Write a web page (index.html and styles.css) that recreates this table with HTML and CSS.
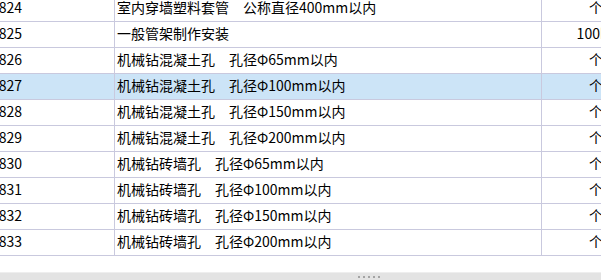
FILE: index.html
```html
<!DOCTYPE html>
<html lang="zh-CN">
<head>
<meta charset="utf-8">
<link rel="stylesheet" href="styles.css">
</head>
<body>
<div class="viewport">
  <div class="grid">
    <div class="row"><div class="c code">3824</div><div class="c name">室内穿墙塑料套管　公称直径400mm以内</div><div class="c unit">个</div></div>
    <div class="row"><div class="c code">3825</div><div class="c name">一般管架制作安装</div><div class="c unit">100kg</div></div>
    <div class="row"><div class="c code">3826</div><div class="c name">机械钻混凝土孔　孔径Φ65mm以内</div><div class="c unit">个</div></div>
    <div class="row sel"><div class="c code">3827</div><div class="c name">机械钻混凝土孔　孔径Φ100mm以内</div><div class="c unit">个</div></div>
    <div class="row"><div class="c code">3828</div><div class="c name">机械钻混凝土孔　孔径Φ150mm以内</div><div class="c unit">个</div></div>
    <div class="row"><div class="c code">3829</div><div class="c name">机械钻混凝土孔　孔径Φ200mm以内</div><div class="c unit">个</div></div>
    <div class="row"><div class="c code">3830</div><div class="c name">机械钻砖墙孔　孔径Φ65mm以内</div><div class="c unit">个</div></div>
    <div class="row"><div class="c code">3831</div><div class="c name">机械钻砖墙孔　孔径Φ100mm以内</div><div class="c unit">个</div></div>
    <div class="row"><div class="c code">3832</div><div class="c name">机械钻砖墙孔　孔径Φ150mm以内</div><div class="c unit">个</div></div>
    <div class="row"><div class="c code">3833</div><div class="c name">机械钻砖墙孔　孔径Φ200mm以内</div><div class="c unit">个</div></div>
  </div>
</div>
<div class="splitter"><span class="grip"></span></div>
</body>
</html>
```
FILE: styles.css
```css
html, body {
  margin: 0;
  padding: 0;
  background: #ffffff;
}
body {
  width: 601px;
  height: 280px;
  overflow: hidden;
  font-family: "Noto Sans CJK SC", "DejaVu Sans", sans-serif;
  font-size: 14px;
  color: #000000;
}
.viewport {
  height: 272px;
  overflow: hidden;
}
.grid {
  margin-top: -4px;
  margin-left: -13px;
  width: 665px;
}
.row {
  display: flex;
  height: 26px;
  box-sizing: border-box;
  border-bottom: 1px solid #c9c9de;
}
.row.sel {
  background: #cce4f7;
}
.c {
  box-sizing: border-box;
  line-height: 22px;
  white-space: nowrap;
  overflow: hidden;
}
.code {
  width: 128px;
  padding-left: 4px;
  border-right: 1px solid #c9c9de;
}
.name {
  width: 427px;
  padding-left: 2px;
  border-right: 1px solid #c9c9de;
}
.unit {
  width: 108px;
  text-align: center;
}
.splitter {
  height: 8px;
  background: #e3e3e3;
  border-top: 1px solid #eeeeee;
  box-sizing: border-box;
  display: flex;
  justify-content: center;
  align-items: center;
}
.grip {
  width: 24px;
  height: 2px;
  margin-left: 138px;
  background: repeating-linear-gradient(90deg, #a4a4a4 0 2px, transparent 2px 5px);
}
```
